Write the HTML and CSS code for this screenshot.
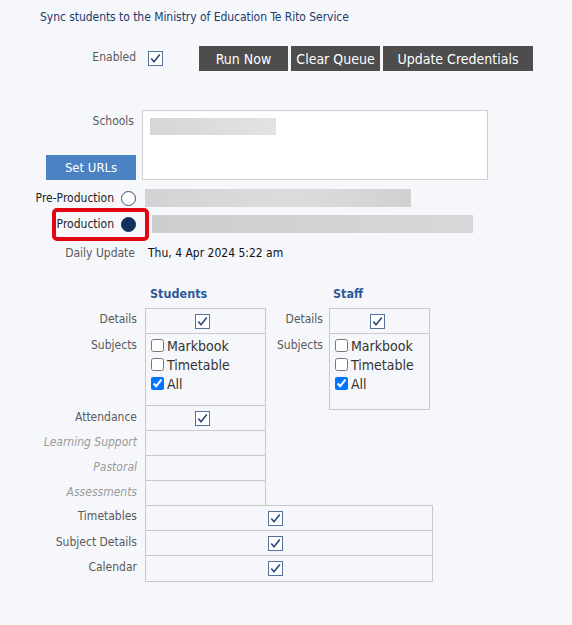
FILE: index.html
```html
<!DOCTYPE html>
<html>
<head>
<meta charset="utf-8">
<link rel="stylesheet" href="styles.css">
</head>
<body>
<div class="page">
  <div class="title">Sync students to the Ministry of Education Te Rito Service</div>

  <div class="row enabled-row">
    <div class="lbl">Enabled</div>
    <span class="cb cb-enabled"><svg width="15" height="15" viewBox="0 0 15 15"><rect x="0.5" y="0.5" width="14" height="14" fill="#fff" stroke="#56739b"/><path d="M3.3 7.6 L6 10.8 L11.8 3.6" fill="none" stroke="#2b4a7a" stroke-width="1.6"/></svg></span>
    <div class="buttons">
      <button class="btn btn-run">Run Now</button>
      <button class="btn btn-clear">Clear Queue</button>
      <button class="btn btn-cred">Update Credentials</button>
    </div>
  </div>

  <div class="row schools-row">
    <div class="lbl schools-lbl">
      <span>Schools</span>
      <button class="seturls">Set URLs</button>
    </div>
    <div class="schools-box"><div class="blur blur-school"></div></div>
  </div>

  <div class="row env-row">
    <div class="lbl env-lbl"><span>Pre-Production</span><span class="radio"></span></div>
    <div class="blur blur-pre"></div>
  </div>

  <div class="row env-row prod-row">
    <div class="lbl env-lbl"><span>Production</span><span class="radio radio-on"></span><span class="highlight"></span></div>
    <div class="blur blur-prod"></div>
  </div>

  <div class="row daily-row">
    <div class="lbl daily-lbl">Daily Update</div>
    <div class="daily-val">Thu, 4 Apr 2024 5:22 am</div>
  </div>

  <div class="sections">
    <div class="sgrid students">
      <div></div><div class="head">Students</div>
      <div class="tlbl">Details</div>
      <div class="cell first h25 pad-s"><svg class="ck" width="15" height="15" viewBox="0 0 15 15"><rect x="0.5" y="0.5" width="14" height="14" fill="#fff" stroke="#56739b"/><path d="M3.3 7.6 L6 10.8 L11.8 3.6" fill="none" stroke="#2b4a7a" stroke-width="1.6"/></svg></div>
      <div class="tlbl">Subjects</div>
      <div class="cell subj-s list">
        <label class="opt"><input type="checkbox"><span>Markbook</span></label>
        <label class="opt"><input type="checkbox"><span>Timetable</span></label>
        <label class="opt"><input type="checkbox" checked><span>All</span></label>
      </div>
      <div class="tlbl">Attendance</div>
      <div class="cell h25 pad-s"><svg class="ck" width="15" height="15" viewBox="0 0 15 15"><rect x="0.5" y="0.5" width="14" height="14" fill="#fff" stroke="#56739b"/><path d="M3.3 7.6 L6 10.8 L11.8 3.6" fill="none" stroke="#2b4a7a" stroke-width="1.6"/></svg></div>
      <div class="tlbl dim">Learning Support</div>
      <div class="cell h25"></div>
      <div class="tlbl dim">Pastoral</div>
      <div class="cell h25"></div>
      <div class="tlbl dim">Assessments</div>
      <div class="cell h25"></div>
    </div>

    <div class="sgrid staff">
      <div></div><div class="head">Staff</div>
      <div class="tlbl">Details</div>
      <div class="cell first h25 pad-t"><svg class="ck" width="15" height="15" viewBox="0 0 15 15"><rect x="0.5" y="0.5" width="14" height="14" fill="#fff" stroke="#56739b"/><path d="M3.3 7.6 L6 10.8 L11.8 3.6" fill="none" stroke="#2b4a7a" stroke-width="1.6"/></svg></div>
      <div class="tlbl">Subjects</div>
      <div class="cell subj-t list">
        <label class="opt"><input type="checkbox"><span>Markbook</span></label>
        <label class="opt"><input type="checkbox"><span>Timetable</span></label>
        <label class="opt"><input type="checkbox" checked><span>All</span></label>
      </div>
    </div>
  </div>

  <div class="sgrid common">
    <div class="tlbl">Timetables</div>
    <div class="cell first h25 pad-c"><svg class="ck" width="15" height="15" viewBox="0 0 15 15"><rect x="0.5" y="0.5" width="14" height="14" fill="#fff" stroke="#56739b"/><path d="M3.3 7.6 L6 10.8 L11.8 3.6" fill="none" stroke="#2b4a7a" stroke-width="1.6"/></svg></div>
    <div class="tlbl">Subject Details</div>
    <div class="cell h25 pad-c"><svg class="ck" width="15" height="15" viewBox="0 0 15 15"><rect x="0.5" y="0.5" width="14" height="14" fill="#fff" stroke="#56739b"/><path d="M3.3 7.6 L6 10.8 L11.8 3.6" fill="none" stroke="#2b4a7a" stroke-width="1.6"/></svg></div>
    <div class="tlbl">Calendar</div>
    <div class="cell h26 pad-c"><svg class="ck" width="15" height="15" viewBox="0 0 15 15"><rect x="0.5" y="0.5" width="14" height="14" fill="#fff" stroke="#56739b"/><path d="M3.3 7.6 L6 10.8 L11.8 3.6" fill="none" stroke="#2b4a7a" stroke-width="1.6"/></svg></div>
  </div>
</div>
</body>
</html>
```

FILE: styles.css
```css
* { box-sizing: border-box; }
body {
  margin: 0;
  background: #f6f7fb;
  font-family: "DejaVu Sans Condensed", "DejaVu Sans", sans-serif;
  font-size: 12px;
  color: #5a5a5a;
}
.page { padding-top: 9px; }
.title {
  padding-left: 40px;
  color: #1c3a6b;
  line-height: 16px;
  height: 16px;
  letter-spacing: -0.05px;
}
.row { display: flex; }
.lbl {
  width: 137px;
  flex: none;
  text-align: right;
  line-height: 16px;
}
.enabled-row { margin-top: 21px; height: 25px; }
.enabled-row .lbl { padding-top: 3px; padding-right: 1px; }
.cb { display: block; margin-left: 11px; margin-top: 5px; height: 15px; }
.cb svg, .ck { display: block; }
.buttons { display: flex; gap: 3px; margin-left: 36px; }
.btn {
  height: 25px;
  border: none;
  background: #4d4d4d;
  color: #fff;
  font-family: inherit;
  font-size: 14px;
  padding: 0;
  margin: 0;
}
.btn-run { width: 89px; }
.btn-clear { width: 89px; }
.btn-cred { width: 150px; }

.schools-row { margin-top: 39px; height: 70px; }
.schools-lbl {
  display: flex;
  flex-direction: column;
  align-items: flex-end;
  justify-content: space-between;
  padding-top: 3px;
}
.schools-lbl span { padding-right: 3px; }
.seturls {
  width: 90px;
  height: 25px;
  border: none;
  margin: 0 1px 0 0;
  padding: 0;
  background: #4a82c4;
  color: #fff;
  font-family: inherit;
  font-size: 13px;
}
.schools-box {
  margin-left: 5px;
  width: 346px;
  height: 70px;
  border: 1px solid #cfcfcf;
  background: #fff;
  padding: 7px;
}
.blur { background: linear-gradient(90deg, #d3d3d5, #dcdcde 55%, #d0d2d1); }
.blur-school { width: 126px; height: 17px; background: linear-gradient(90deg, #d6d6d6, #e3e3e3); }

.env-row { margin-top: 9px; height: 18px; align-items: center; }
.env-lbl {
  display: flex;
  justify-content: flex-end;
  align-items: center;
  gap: 7px;
  padding-right: 1px;
  color: #222;
  position: relative;
}
.radio {
  width: 15px;
  height: 15px;
  border-radius: 50%;
  border: 1.4px solid #3f4f6e;
  background: #fff;
  flex: none;
}
.radio-on { background: #0f2f5c; border-color: #0f2f5c; }
.blur-pre { margin-left: 8px; width: 266px; height: 18px; }
.prod-row { margin-top: 8px; }
.blur-prod { margin-left: 15px; width: 321px; height: 18px; background: linear-gradient(90deg, #cdcdd0, #d8d8da); }
.highlight {
  position: absolute;
  left: 52px;
  right: -12px;
  top: -8px;
  bottom: -9px;
  border: 4px solid #e30613;
  border-radius: 5px;
}

.daily-row { margin-top: 12px; }
.daily-lbl { padding-right: 2px; }
.daily-val { margin-left: 11px; color: #111; line-height: 16px; }

.sections { display: flex; margin-top: 25px; }
.sgrid { display: grid; align-content: start; }
.students { grid-template-columns: 137px 121px; column-gap: 8px; }
.staff { grid-template-columns: 57px 101px; column-gap: 6px; }
.head {
  height: 22px;
  line-height: 16px;
  font-weight: bold;
  color: #2d5a9a;
  padding-left: 5px;
  font-size: 12.5px;
}
.staff .head { padding-left: 4px; }
.tlbl { text-align: right; line-height: 16px; padding-top: 3px; }
.dim { color: #9a9a9a; font-style: italic; }
.cell {
  border: 1px solid #c9c9c9;
  border-top: none;
}
.cell.first { border-top: 1px solid #c9c9c9; }
.h25 { height: 25px; padding-top: 5px; }
.first.h25 { height: 26px; }
.h26 { height: 26px; padding-top: 5px; }
.pad-s { padding-left: 49px; }
.pad-t { padding-left: 40px; }
.pad-c { padding-left: 122px; }
.subj-s { height: 72px; }
.subj-t { height: 76px; }
.list { padding-top: 2px; padding-left: 5px; display: flex; flex-direction: column; }
.opt {
  display: flex;
  align-items: center;
  height: 19px;
  font-size: 14px;
  color: #333;
}
.opt input { margin: 0 3px 0 0; width: 13px; height: 13px; }
.common { grid-template-columns: 137px 288px; column-gap: 8px; margin-top: -1px; }
```
